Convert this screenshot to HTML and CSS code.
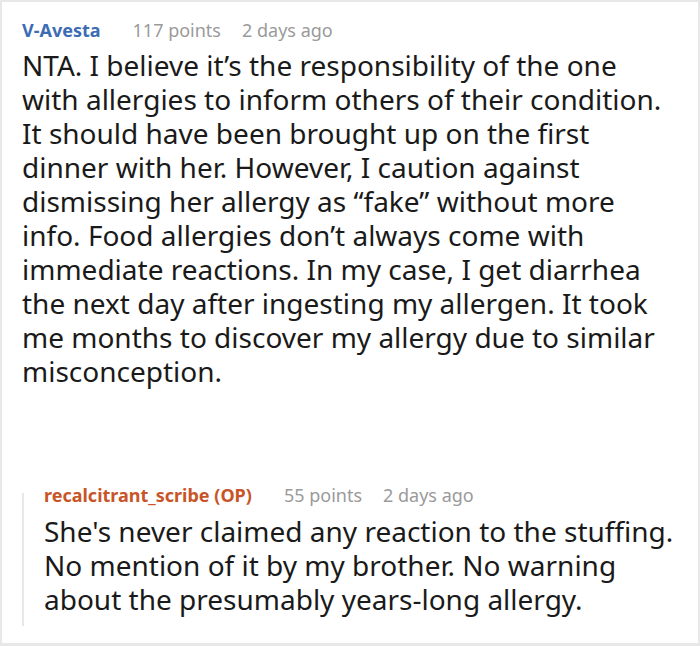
FILE: index.html
```html
<!DOCTYPE html>
<html>
<head>
<meta charset="utf-8">
<link rel="stylesheet" href="styles.css">
</head>
<body>
<div class="card">
  <div class="comment">
    <div class="meta">
      <span class="user">V-Avesta</span>
      <span class="info">117 points</span>
      <span class="info">2 days ago</span>
    </div>
    <p class="text">NTA. I believe it’s the responsibility of the one with allergies to inform others of their condition. It should have been brought up on the first dinner with her. However, I caution against dismissing her allergy as “fake” without more info. Food allergies don’t always come with immediate reactions. In my case, I get diarrhea the next day after ingesting my allergen. It took me months to discover my allergy due to similar misconception.</p>
    <div class="reply">
      <div class="meta">
        <span class="user op">recalcitrant_scribe (OP)</span>
        <span class="info">55 points</span>
        <span class="info">2 days ago</span>
      </div>
      <p class="text reply-text">She's never claimed any reaction to the stuffing. No mention of it by my brother. No warning about the presumably years-long allergy.</p>
    </div>
  </div>
</div>
</body>
</html>
```
FILE: styles.css
```css
html, body {
  margin: 0;
  padding: 0;
  background: #fff;
}
.card {
  box-sizing: border-box;
  width: 700px;
  height: 646px;
  border: 2px solid #e8e8e8;
  border-bottom-width: 3px;
  overflow: hidden;
  font-family: "Noto Sans", "Open Sans", sans-serif;
  color: #1a1a1a;
}
.comment {
  padding: 17px 18px 0 20px;
}
.meta {
  display: flex;
  gap: 21px;
  font-size: 18px;
  line-height: 22px;
  white-space: nowrap;
}
.user {
  color: #3b6cb4;
  font-weight: 700;
  margin-right: 11px;
}
.user.op {
  color: #c85528;
}
.info {
  color: #9a9a9a;
}
.text {
  margin: 7px 0 0 0;
  font-size: 28px;
  line-height: 34px;
}
.reply-text {
  margin-top: 8px;
}
.reply {
  position: relative;
  margin-top: 96px;
  padding: 0 0 10px 22px;
}
.reply::before {
  content: "";
  position: absolute;
  left: 0;
  top: 9px;
  bottom: 0;
  width: 2px;
  background: #e8e8e8;
}
```
